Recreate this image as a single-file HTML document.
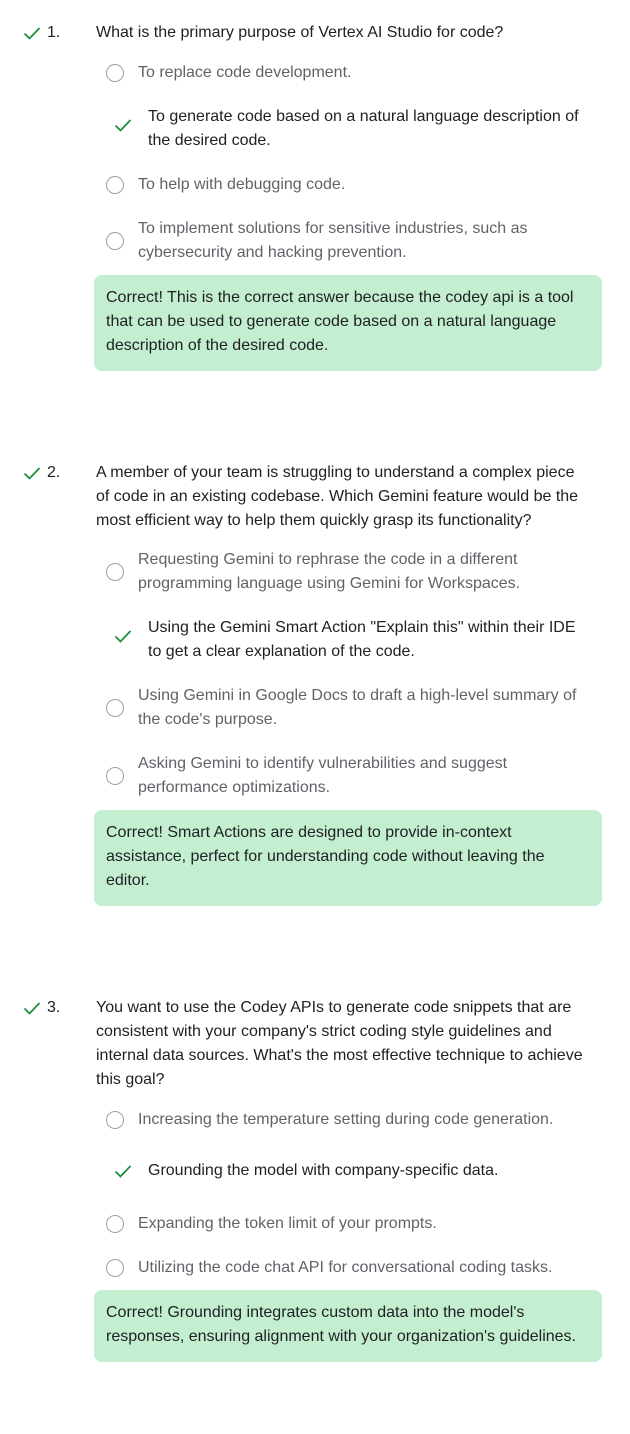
<!DOCTYPE html>
<html><head><meta charset="utf-8"><style>
body{margin:0;width:630px;height:1434px;background:#fff;position:relative;font-family:"Liberation Sans",Arial,sans-serif;font-size:16px;overflow:hidden}
.t{position:absolute;line-height:24px;white-space:nowrap}
.q{color:#202124}
.o{color:#5f6368}
.c{color:#202124}
.r{position:absolute;width:18px;height:18px;border:1.6px solid #9aa0a6;border-radius:50%;box-sizing:border-box}
.k{position:absolute}
.box{position:absolute;left:94px;width:508px;background:#c4eed0;border-radius:8px}
.n{position:absolute;color:#202124;line-height:24px;left:47px}
</style></head><body>
<svg width="0" height="0" style="position:absolute"><defs><symbol id="ck" viewBox="0 0 20 20"><path d="M2.5 10.5 L7.5 15.5 L17.5 5" fill="none" stroke="#1e8e3e" stroke-width="1.8"/></symbol></defs></svg>

<!-- Q1 -->
<svg class="k" style="left:22px;top:23px" width="20" height="20"><use href="#ck"/></svg>
<div class="n" style="top:21px">1.</div>
<div class="t q" style="left:96px;top:21px">What is the primary purpose of Vertex AI Studio for code?</div>
<div class="r" style="left:106px;top:64px"></div>
<div class="t o" style="left:138px;top:61px">To replace code development.</div>
<svg class="k" style="left:113px;top:115px" width="20" height="20"><use href="#ck"/></svg>
<div class="t c" style="left:148px;top:105px">To generate code based on a natural language description of<br>the desired code.</div>
<div class="r" style="left:106px;top:176px"></div>
<div class="t o" style="left:138px;top:173px">To help with debugging code.</div>
<div class="r" style="left:106px;top:232px"></div>
<div class="t o" style="left:138px;top:217px">To implement solutions for sensitive industries, such as<br>cybersecurity and hacking prevention.</div>
<div class="box" style="top:275px;height:96px"></div>
<div class="t q" style="left:106px;top:286px">Correct! This is the correct answer because the codey api is a tool<br>that can be used to generate code based on a natural language<br>description of the desired code.</div>

<!-- Q2 -->
<svg class="k" style="left:22px;top:463px" width="20" height="20"><use href="#ck"/></svg>
<div class="n" style="top:461px">2.</div>
<div class="t q" style="left:96px;top:461px">A member of your team is struggling to understand a complex piece<br>of code in an existing codebase. Which Gemini feature would be the<br>most efficient way to help them quickly grasp its functionality?</div>
<div class="r" style="left:106px;top:563px"></div>
<div class="t o" style="left:138px;top:548px">Requesting Gemini to rephrase the code in a different<br>programming language using Gemini for Workspaces.</div>
<svg class="k" style="left:113px;top:626px" width="20" height="20"><use href="#ck"/></svg>
<div class="t c" style="left:148px;top:616px">Using the Gemini Smart Action "Explain this" within their IDE<br>to get a clear explanation of the code.</div>
<div class="r" style="left:106px;top:699px"></div>
<div class="t o" style="left:138px;top:684px">Using Gemini in Google Docs to draft a high-level summary of<br>the code's purpose.</div>
<div class="r" style="left:106px;top:767px"></div>
<div class="t o" style="left:138px;top:752px">Asking Gemini to identify vulnerabilities and suggest<br>performance optimizations.</div>
<div class="box" style="top:810px;height:96px"></div>
<div class="t q" style="left:106px;top:821px">Correct! Smart Actions are designed to provide in-context<br>assistance, perfect for understanding code without leaving the<br>editor.</div>

<!-- Q3 -->
<svg class="k" style="left:22px;top:998px" width="20" height="20"><use href="#ck"/></svg>
<div class="n" style="top:996px">3.</div>
<div class="t q" style="left:96px;top:996px">You want to use the Codey APIs to generate code snippets that are<br>consistent with your company's strict coding style guidelines and<br>internal data sources. What's the most effective technique to achieve<br>this goal?</div>
<div class="r" style="left:106px;top:1111px"></div>
<div class="t o" style="left:138px;top:1108px">Increasing the temperature setting during code generation.</div>
<svg class="k" style="left:113px;top:1161px" width="20" height="20"><use href="#ck"/></svg>
<div class="t c" style="left:148px;top:1159px">Grounding the model with company-specific data.</div>
<div class="r" style="left:106px;top:1215px"></div>
<div class="t o" style="left:138px;top:1212px">Expanding the token limit of your prompts.</div>
<div class="r" style="left:106px;top:1259px"></div>
<div class="t o" style="left:138px;top:1256px">Utilizing the code chat API for conversational coding tasks.</div>
<div class="box" style="top:1290px;height:72px"></div>
<div class="t q" style="left:106px;top:1301px">Correct! Grounding integrates custom data into the model's<br>responses, ensuring alignment with your organization's guidelines.</div>
</body></html>
